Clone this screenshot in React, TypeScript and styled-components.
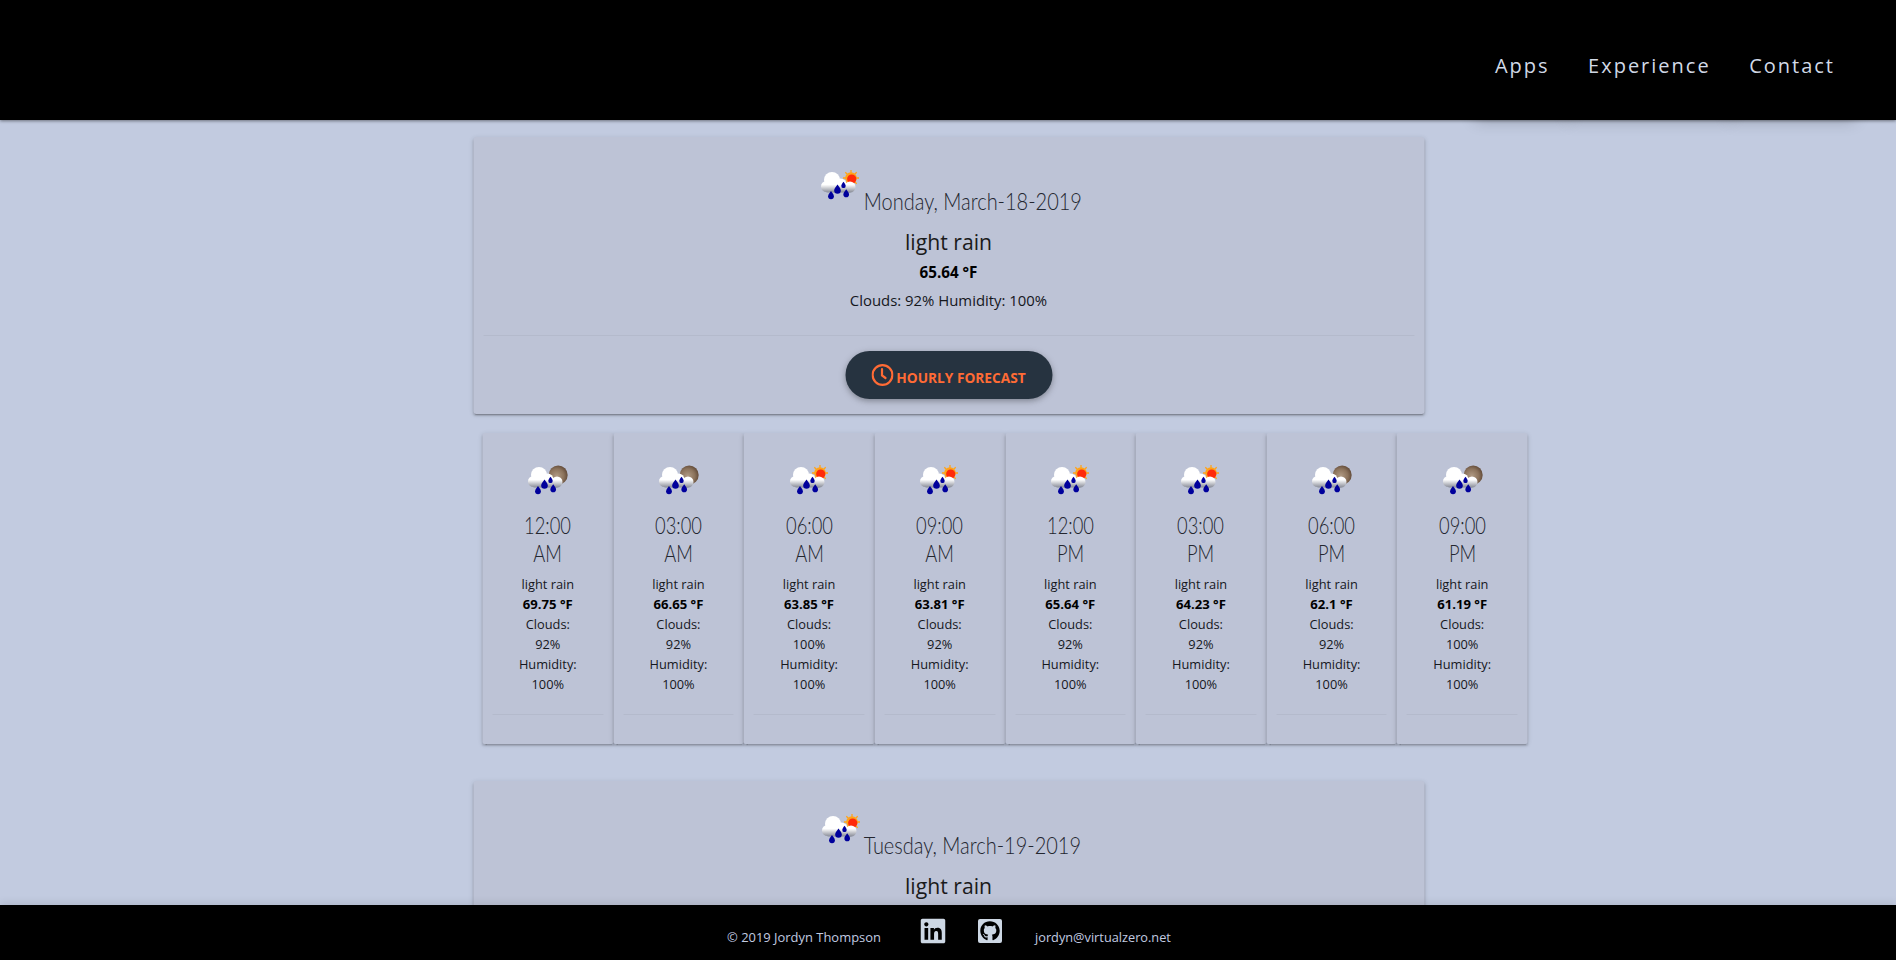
import React from "react";
import styled, { createGlobalStyle } from "styled-components";
import { FaLinkedin, FaGithub } from "react-icons/fa";

const Global = createGlobalStyle`
  html, body { margin: 0; padding: 0; height: 100%; overflow: hidden; }
  body { background: #c2cbe0; font-family: "Open Sans", "Liberation Sans", sans-serif; color: #111; }
  #root { height: 100%; }
`;

const Page = styled.div`
  height: 960px;
  display: flex;
  flex-direction: column;
  overflow: hidden;
`;

const Header = styled.header`
  position: relative;
  z-index: 2;
  flex: 0 0 120px;
  background: #000;
  display: flex;
  justify-content: flex-end;
  align-items: center;
  gap: 38.500px;
  padding: 11px 61px 0 0;
  box-sizing: border-box;
  box-shadow: 0 1px 3px rgba(0, 0, 0, 0.45);
`;

const NavLink = styled.a`
  position: relative;
  font-size: 20px;
  letter-spacing: 2px;
  color: #d3dbe8;
  &::after {
    content: "";
    position: absolute;
    left: -20px;
    right: -20px;
    bottom: -40px;
    height: 40px;
    box-shadow: 0 2px 16px rgba(0, 0, 0, 0.2);
  }
`;

const Main = styled.main`
  flex: 1;
  min-height: 0;
  overflow: hidden;
  padding-top: 17px;
`;

const Column = styled.div`
  width: 951px;
  margin: 0 auto;
  transform: translateX(0.5px);
`;

const cardShadow = `0 2px 2px 0 rgba(0,0,0,.14), 0 3px 1px -2px rgba(0,0,0,.2), 0 1px 5px 0 rgba(0,0,0,.12)`;

const DayCard = styled.section`
  background: #bdc3d6;
  border-radius: 3px;
  box-shadow: ${cardShadow};
  height: 277px;
  box-sizing: border-box;
  padding-top: 23px;
  text-align: center;
`;

const DayTitle = styled.h2`
  margin: 0;
  height: 50px;
  font-family: Lato, "Open Sans", sans-serif;
  font-size: 23.5px;
  line-height: 50px;
  font-weight: 300;
  color: #23262f;
  display: flex;
  justify-content: center;
  align-items: flex-end;
  & > svg { margin-right: -2px; }
  & > span {
    display: inline-block;
    line-height: 30px;
    margin: 0 -19.500px -6px;
    transform: scaleX(0.85);
  }
`;

const DayDesc = styled.div`
  font-size: 21.2px;
  line-height: 28px;
  margin-top: 18px;
  color: #1a1a1a;
`;

const DayTemp = styled.div`
  font-size: 15.2px;
  font-weight: 700;
  line-height: 20px;
  margin-top: 6px;
  color: #000;
`;

const DayStats = styled.div`
  font-size: 14.9px;
  line-height: 20px;
  margin-top: 8px;
  color: #15171d;
`;

const Rule = styled.hr`
  border: 0;
  border-top: 1px solid rgba(0, 0, 0, 0.045);
  margin: 0 10px;
`;

const DayRule = styled(Rule)`
  margin-top: 25px;
`;

const ForecastButton = styled.button`
  display: inline-flex;
  align-items: center;
  justify-content: center;
  gap: 3px;
  width: 207px;
  height: 48px;
  margin-top: 15px;
  border: 0;
  border-radius: 24px;
  background: #263340;
  color: #ff6b35;
  font-family: inherit;
  font-size: 13.7px;
  font-weight: 700;
  text-transform: uppercase;
  box-shadow: 0 2px 5px rgba(0, 0, 0, 0.2), 0 2px 8px rgba(0, 0, 0, 0.14);
  & > span { margin-top: 4px; }
`;

const HourRow = styled.div`
  display: flex;
  width: 1045px;
  margin: 19px 0 37px 9.500px;
`;

const HourCard = styled.article`
  flex: 1 1 0;
  height: 311px;
  box-sizing: border-box;
  background: #bdc3d6;
  box-shadow: ${cardShadow};
  border-radius: 2px;
  padding-top: 22px;
  text-align: center;
`;

const IconSlot = styled.div`
  height: 50px;
  display: flex;
  justify-content: center;
`;

const HourTime = styled.div`
  width: 80px;
  margin: 6px auto 0;
  font-family: Lato, "Open Sans", sans-serif;
  font-size: 23.2px;
  line-height: 28px;
  font-weight: 300;
  color: #23262f;
  transform: scaleX(0.79);
`;

const HourLine = styled.div<{ $bold?: boolean }>`
  font-size: ${(p) => (p.$bold ? "13.1px" : "12.8px")};
  line-height: 20px;
  font-weight: ${(p) => (p.$bold ? 700 : 400)};
  color: ${(p) => (p.$bold ? "#000" : "#15171d")};
`;

const HourText = styled.div`
  margin-top: 7px;
`;

const HourRule = styled(Rule)`
  margin-top: 20px;
`;

const Footer = styled.footer`
  position: relative;
  z-index: 2;
  flex: 0 0 55px;
  background: #000;
  color: #c2cbe0;
  font-size: 12.95px;
  display: flex;
  align-items: center;
  padding-left: 727px;
  box-sizing: border-box;
  box-shadow: 0 -2px 8px rgba(0, 0, 0, 0.1);
`;

const Copyright = styled.span`
  width: 194px;
  margin-top: 9px;
`;

const SocialLink = styled.a`
  display: block;
  width: 57px;
  height: 28px;
  font-size: 28px;
  margin-left: -2px;
  margin-right: 2px;
  margin-top: -3px;
  color: #cdd7e4;
  & > svg { display: block; }
`;

const GithubBadge = styled.span`
  display: flex;
  align-items: center;
  justify-content: center;
  width: 24px;
  height: 24px;
  margin: 2px 0 0 2px;
  border-radius: 2px;
  background: #cdd7e4;
  color: #000;
  font-size: 20px;
`;

const Mail = styled.span`
  margin-top: 9px;
  font-size: 12.75px;
`;

const WeatherIcon: React.FC<{ night?: boolean }> = ({ night }) => (
  <svg width="50" height="50" viewBox="-1 0 50 50" style={{ flex: "none" }}>
    <defs>
      <linearGradient id="cloudFill" gradientUnits="userSpaceOnUse" x1="0" y1="12" x2="0" y2="32.500">
        <stop offset="0" stopColor="#ffffff" />
        <stop offset="0.62" stopColor="#ffffff" />
        <stop offset="1" stopColor="#868a96" />
      </linearGradient>
      <radialGradient id="moonFill" cx="0.42" cy="0.55" r="0.62">
        <stop offset="0" stopColor="#b09a84" />
        <stop offset="0.6" stopColor="#8c735c" />
        <stop offset="1" stopColor="#5c4534" />
      </radialGradient>
    </defs>
    {night ? (
      <circle cx="34.700" cy="20" r="9.500" fill="url(#moonFill)" />
    ) : (
      <g>
        <g stroke="#ffa31a" strokeWidth="1.300">
          <path d="M34.500 10v16M26.500 18h16M28.800 12.300l11.400 11.400M40.200 12.300 28.800 23.700" />
        </g>
        <circle cx="34.500" cy="18" r="5.800" fill="#ffa31a" />
        <circle cx="35.200" cy="19" r="4.600" fill="#ff2a0a" />
      </g>
    )}
    <g fill="url(#cloudFill)">
      <circle cx="15.500" cy="20" r="8" />
      <circle cx="10" cy="26.500" r="5.500" />
      <circle cx="24" cy="24.500" r="6" />
      <circle cx="33.500" cy="27" r="5.500" />
      <rect x="10" y="24" width="24" height="8.500" />
    </g>
    <g fill="#00009c">
      <path d="M14.500 31c1.900 2.500 2.900 4 2.900 5.300a2.900 2.900 0 0 1-5.800 0c0-1.300 1-2.800 2.900-5.300z" />
      <path d="M21 24.500c2.200 2.800 3.300 4.500 3.300 5.900a3.300 3.300 0 0 1-6.600 0c0-1.400 1.100-3.100 3.300-5.900z" />
      <path d="M27 21.800c1.500 1.900 2.200 3.100 2.200 4.100a2.200 2.200 0 0 1-4.400 0c0-1 .7-2.200 2.200-4.100z" />
      <path d="M29.700 29.300c1.900 2.400 2.800 3.800 2.800 5.100a2.800 2.800 0 0 1-5.600 0c0-1.300.9-2.700 2.800-5.100z" />
    </g>
  </svg>
);

const hours = [
  { a: "12:00", b: "AM", t: "69.75", c: "92%", night: true },
  { a: "03:00", b: "AM", t: "66.65", c: "92%", night: true },
  { a: "06:00", b: "AM", t: "63.85", c: "100%", night: false },
  { a: "09:00", b: "AM", t: "63.81", c: "92%", night: false },
  { a: "12:00", b: "PM", t: "65.64", c: "92%", night: false },
  { a: "03:00", b: "PM", t: "64.23", c: "92%", night: false },
  { a: "06:00", b: "PM", t: "62.1", c: "92%", night: true },
  { a: "09:00", b: "PM", t: "61.19", c: "100%", night: true },
];

const ClockIcon = () => (
  <svg width="22" height="22" viewBox="0 0 22 22" fill="none" stroke="currentColor" strokeWidth="2.200" strokeLinecap="round">
    <circle cx="11" cy="11" r="9.900" />
    <path d="M10.500 5V11.500l3.500 2.500" />
  </svg>
);

export default function App() {
  return (
    <Page>
      <Global />
      <Header>
        <NavLink>Apps</NavLink>
        <NavLink>Experience</NavLink>
        <NavLink>Contact</NavLink>
      </Header>
      <Main>
        <Column>
          <DayCard>
            <DayTitle>
              <WeatherIcon />
              <span>Monday, March-18-2019</span>
            </DayTitle>
            <DayDesc>light rain</DayDesc>
            <DayTemp>65.64 °F</DayTemp>
            <DayStats>Clouds: 92% Humidity: 100%</DayStats>
            <DayRule />
            <ForecastButton>
              <ClockIcon />
              <span>Hourly Forecast</span>
            </ForecastButton>
          </DayCard>
          <HourRow>
            {hours.map((h, i) => (
              <HourCard key={i}>
                <IconSlot>
                  <WeatherIcon night={h.night} />
                </IconSlot>
                <HourTime>
                  {h.a} {h.b}
                </HourTime>
                <HourText>
                  <HourLine>light rain</HourLine>
                  <HourLine $bold>{h.t} °F</HourLine>
                  <HourLine>Clouds:</HourLine>
                  <HourLine>{h.c}</HourLine>
                  <HourLine>Humidity:</HourLine>
                  <HourLine>100%</HourLine>
                </HourText>
                <HourRule />
              </HourCard>
            ))}
          </HourRow>
          <DayCard>
            <DayTitle>
              <WeatherIcon />
              <span>Tuesday, March-19-2019</span>
            </DayTitle>
            <DayDesc>light rain</DayDesc>
          </DayCard>
        </Column>
      </Main>
      <Footer>
        <Copyright>© 2019 Jordyn Thompson</Copyright>
        <SocialLink><FaLinkedin /></SocialLink>
        <SocialLink><GithubBadge><FaGithub /></GithubBadge></SocialLink>
        <Mail>jordyn@virtualzero.net</Mail>
      </Footer>
    </Page>
  );
}
